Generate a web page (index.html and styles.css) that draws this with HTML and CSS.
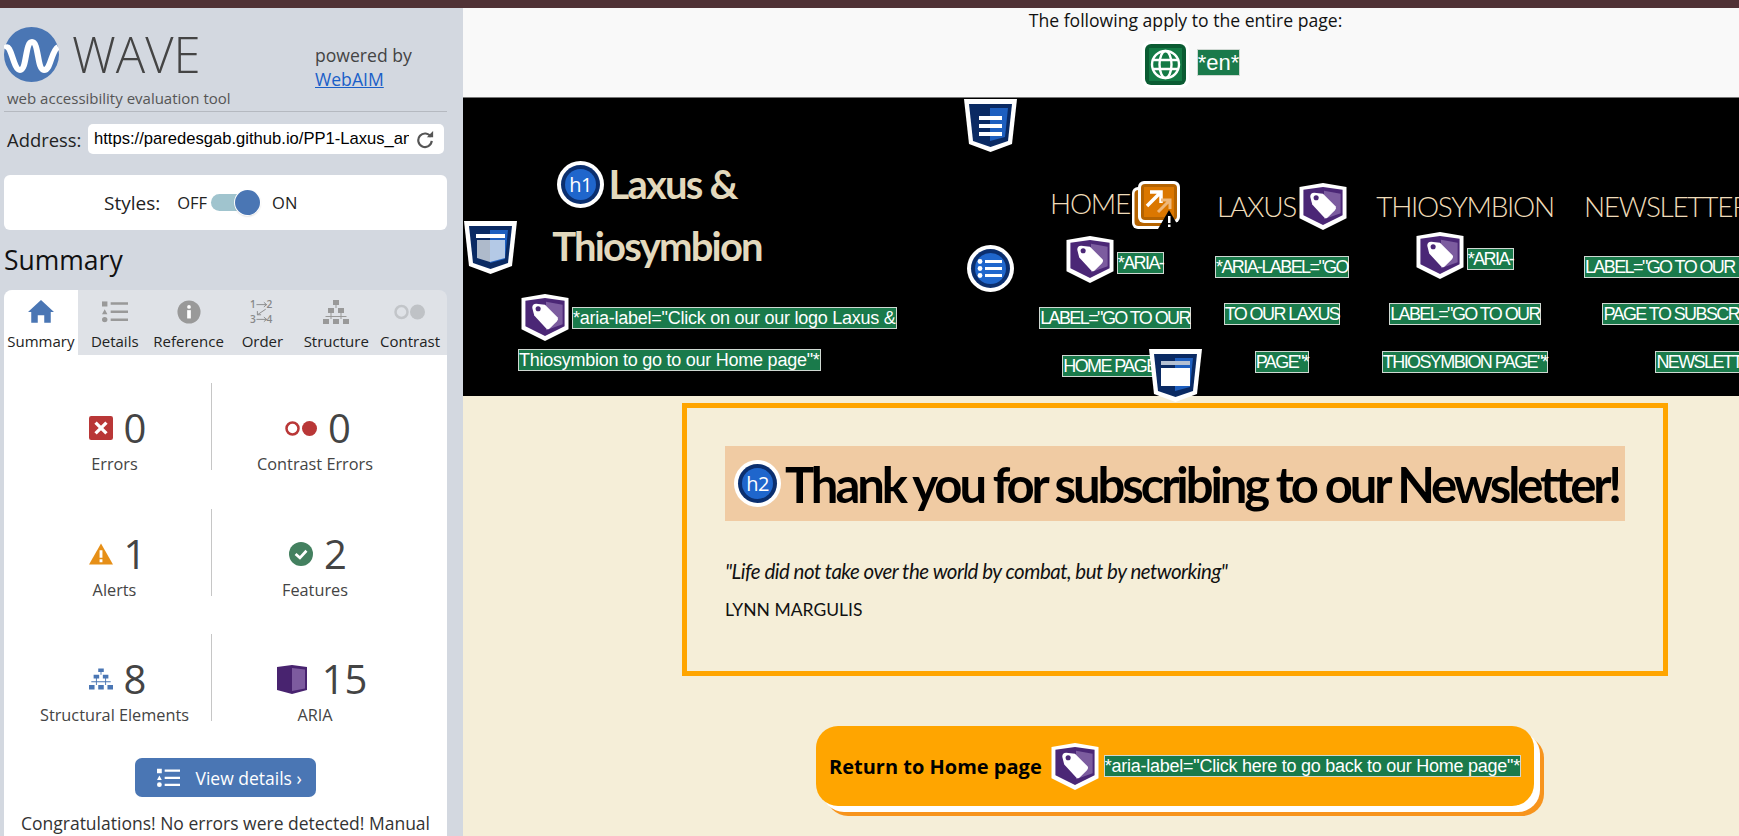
FILE: index.html
```html
<!DOCTYPE html>
<html lang="en">
<head>
  <meta charset="UTF-8" />
  <meta name="viewport" content="width=device-width, initial-scale=1.0"/>
  <title>WAVE - Thank you page</title>
  <link rel="stylesheet" href="styles.css">
</head>
<body>
  <!-- icon sprites -->
  <svg class="sprites" aria-hidden="true">
    <symbol id="i-tag" viewBox="0 0 48 48">
      <path fill="#fff" d="M24 0L48 4V36L24 48L0 36V4Z"/>
      <path fill="#4b2776" d="M24 4L44 7V33L24 43L4 33V7Z"/>
      <path fill="#7c5c9f" d="M25 8L42 11V31L25 37Z"/>
      <path fill="#fff" d="M11 14Q11 10 15 10L24 11L37 24Q38 26 36 28L29 35Q27 37 25 35L13 22Z"/>
      <circle cx="17" cy="15" r="2.600" fill="#4b2776"/>
    </symbol>
    <symbol id="i-section" viewBox="0 0 53 53">
      <path fill="#fff" d="M0 0H53L48 45L26.500 53L5 45Z"/>
      <path fill="#0a2a63" d="M5 5H48L44 42L26.500 48L9 42Z"/>
      <path fill="#1e5fbf" d="M26 9H44L41 38L26 42Z"/>
      <path fill="#fff" d="M15 18H38V22H15ZM15 26H38V30H15ZM15 34H38V38H15Z" transform="translate(0 -1)"/>
    </symbol>
    <symbol id="i-aside" viewBox="0 0 53 53">
      <path fill="#fff" d="M0 0H53L48 45L26.500 53L5 45Z"/>
      <path fill="#0a2a63" d="M5 5H48L44 42L26.500 48L9 42Z"/>
      <path fill="#1e5fbf" d="M26 9H44L41 38L26 42Z"/>
      <path fill="#b4c9e6" d="M26 19H41V37L26 41Z"/>
      <path fill="#aebacb" d="M13 19H26V41L13 37Z"/>
      <path fill="#fff" d="M12 13H41V17H12Z"/>
    </symbol>
    <symbol id="i-window" viewBox="0 0 53 53">
      <path fill="#fff" d="M0 0H53L48 45L26.500 53L5 45Z"/>
      <path fill="#0a2a63" d="M5 5H48L44 42L26.500 48L9 42Z"/>
      <path fill="#1e5fbf" d="M26 9H44L41 38L26 42Z"/>
      <path fill="#fff" d="M12 19H41V37H12Z"/>
      <path fill="#b4c0d2" d="M12 12H41V16H12Z"/>
    </symbol>
    <symbol id="i-list" viewBox="0 0 47 47">
      <circle cx="23.500" cy="23.500" r="23.500" fill="#fff"/>
      <circle cx="23.500" cy="23.500" r="19.500" fill="#0b2f6f"/>
      <circle cx="23.500" cy="23.500" r="15.500" fill="#1f66cc"/>
      <path fill="#fff" d="M18 15H35V18H18ZM18 22H35V25H18ZM18 29H35V32H18Z"/>
      <circle cx="13" cy="16.500" r="2.400" fill="#fff"/>
      <circle cx="13" cy="23.500" r="2.400" fill="#fff"/>
      <circle cx="13" cy="30.500" r="2.400" fill="#fff"/>
    </symbol>
    <symbol id="i-tag-lines" viewBox="0 0 24 20">
      <path fill="currentColor" d="M0 0H5V5H0ZM2.500 7.500L5 12H0Z"/>
      <circle cx="2.500" cy="17" r="2.500" fill="currentColor"/>
      <path fill="currentColor" d="M8 1H24V3.400H8ZM8 8.600H24V11H8ZM8 16H24V18.400H8Z"/>
    </symbol>
  </svg>

  <div class="topbar"></div>

  <div class="layout">
    <aside class="sidebar">
      <div class="brand">
        <div class="brand-main">
          <div class="wave-row">
            <svg class="wave-logo" viewBox="0 0 55 55">
              <circle cx="27.500" cy="27.500" r="27.500" fill="#4a76b4"/>
              <path fill="none" stroke="#fff" stroke-width="6" d="M1 22C7 13 9 43 16 43C23 43 21 15 28 15C35 15 33 43 40 43C47 43 47 24 54 20"/>
            </svg>
            <span class="wave-name">WAVE</span>
          </div>
          <div class="tagline">web accessibility evaluation tool</div>
        </div>
        <div class="powered">powered by<br><a href="#">WebAIM</a></div>
      </div>

      <div class="address">
        <label for="url">Address:</label>
        <div class="address-box">
          <input id="url" type="text" readonly value="https://paredesgab.github.io/PP1-Laxus_and_Thiosymbion/thank-you.html">
          <svg class="reload" viewBox="0 0 20 20">
            <path fill="none" stroke="#555" stroke-width="2.400" d="M16.500 6.500A7.500 7.500 0 1 0 17.500 11"/>
            <path fill="#555" d="M12 7H19V0Z"/>
          </svg>
        </div>
      </div>

      <div class="styles-box">
        <span class="styles-label">Styles:</span>
        <span class="styles-state">OFF</span>
        <span class="toggle"><span class="knob"></span></span>
        <span class="styles-state">ON</span>
      </div>

      <h2 class="summary-title">Summary</h2>

      <nav class="tabs">
        <a class="tab active" href="#">
          <svg viewBox="0 0 24 22"><path fill="#4a76b4" d="M12 0L24 11H21V21H15V14H9V21H3V11H0Z"/></svg>
          Summary
        </a>
        <a class="tab" href="#">
          <svg viewBox="0 0 24 20"><use href="#i-tag-lines"/></svg>
          Details
        </a>
        <a class="tab" href="#">
          <svg viewBox="0 0 26 26"><circle cx="13" cy="13" r="12.500" fill="#999"/><circle cx="13" cy="7.500" r="2" fill="#fff"/><path fill="#fff" d="M11 11H15V20H11Z"/></svg>
          Reference
        </a>
        <a class="tab" href="#">
          <svg viewBox="0 0 26 26" class="order-icon">
            <text x="0" y="9">1</text><text x="18" y="9">2</text><text x="0" y="25">3</text><text x="18" y="25">4</text>
            <path fill="none" stroke="#888" d="M7 5H18M15 2.500L18 5L15 7.500M17 10L8 16M8 12V16H12M7 21H18M15 18.500L18 21L15 23.500"/>
          </svg>
          Order
        </a>
        <a class="tab" href="#">
          <svg viewBox="0 0 26 24"><path fill="#999" d="M10 0H16V5H10ZM5 8H11V13H5ZM15 8H21V13H15ZM0 19H6V24H0ZM10 19H16V24H10ZM20 19H26V24H20ZM12.500 5H13.500V8H12.500ZM7.500 13H8.500V19H7.500ZM17.500 13H18.500V19H17.500ZM2.500 16H23.500V17H2.500Z"/></svg>
          Structure
        </a>
        <a class="tab faded" href="#">
          <svg viewBox="0 0 32 16"><circle cx="7.500" cy="8" r="6" fill="none" stroke="#c2c5c9" stroke-width="2.500"/><circle cx="23.500" cy="8" r="7.500" fill="#bfc2c6"/></svg>
          Contrast
        </a>
      </nav>

      <div class="panel">
        <div class="stats">
          <div class="stat">
            <div class="stat-top">
              <svg class="stat-icon" viewBox="0 0 22 22"><rect width="22" height="22" rx="2" fill="#b93737"/><path stroke="#fff" stroke-width="3" d="M6 6L16 16M16 6L6 16"/></svg>
              <span class="stat-num">0</span>
            </div>
            <div class="stat-label">Errors</div>
          </div>
          <div class="stat">
            <div class="stat-top">
              <svg class="stat-icon contrast-icon" viewBox="0 0 32 15"><circle cx="7.500" cy="7.500" r="6" fill="none" stroke="#b93737" stroke-width="2.500"/><circle cx="24.500" cy="7.500" r="7.500" fill="#b93737"/></svg>
              <span class="stat-num">0</span>
            </div>
            <div class="stat-label">Contrast Errors</div>
          </div>
          <div class="stat">
            <div class="stat-top">
              <svg class="stat-icon" viewBox="0 0 25 22"><path fill="#e68f17" d="M12.500 0L25 22H0Z"/><path fill="#fff" d="M11 7H14V15H11ZM11 16.500H14V19.500H11Z"/></svg>
              <span class="stat-num">1</span>
            </div>
            <div class="stat-label">Alerts</div>
          </div>
          <div class="stat">
            <div class="stat-top">
              <svg class="stat-icon" viewBox="0 0 22 22"><circle cx="11" cy="11" r="11" fill="#43805f"/><path fill="none" stroke="#fff" stroke-width="2.500" d="M6 11L10 14.500L16 8"/></svg>
              <span class="stat-num">2</span>
            </div>
            <div class="stat-label">Features</div>
          </div>
          <div class="stat">
            <div class="stat-top">
              <svg class="stat-icon" viewBox="0 0 26 23"><path fill="#4a76b4" d="M10 0H16V4H10ZM5 7H11V11H5ZM15 7H21V11H15ZM0 18H6V23H0ZM10 18H16V23H10ZM20 18H26V23H20ZM12.500 4H13.500V7H12.500ZM7.500 11H8.500V18H7.500ZM17.500 11H18.500V18H17.500ZM2.500 14H23.500V15H2.500Z"/></svg>
              <span class="stat-num">8</span>
            </div>
            <div class="stat-label">Structural Elements</div>
          </div>
          <div class="stat">
            <div class="stat-top">
              <svg class="stat-icon aria-icon" viewBox="0 0 30 29"><path fill="#48236f" d="M0 2L15 0L30 2V25L15 29L0 25Z"/><path fill="#7d5b9f" d="M15 3L28 4.500V23.500L15 26Z"/></svg>
              <span class="stat-num">15</span>
            </div>
            <div class="stat-label">ARIA</div>
          </div>
        </div>

        <a class="details-btn" href="#">
          <svg viewBox="0 0 24 20"><use href="#i-tag-lines"/></svg>
          View details ›
        </a>
        <p class="congrats">Congratulations! No errors were detected! Manual testing is still necessary.</p>
      </div>
    </aside>

    <div class="page">
      <div class="page-inner">
        <section class="page-level">
          <div class="page-level-title">The following apply to the entire page:</div>
          <div class="page-level-row">
            <svg class="globe" viewBox="0 0 47 47">
              <rect width="47" height="47" rx="8" fill="#fff"/>
              <rect x="3" y="3" width="41" height="41" rx="6" fill="#0b5c33"/>
              <rect x="7" y="7" width="33" height="33" fill="#147a45"/>
              <g fill="none" stroke="#fff" stroke-width="2.400">
                <circle cx="23.500" cy="23.500" r="13.500"/>
                <ellipse cx="23.500" cy="23.500" rx="6" ry="13.500"/>
                <path d="M11 19H36M11 28H36"/>
              </g>
            </svg>
            <span class="lang-label">*en*</span>
          </div>
        </section>

        <header class="site-header">
          <div class="site-brand">
            <h1>
              <span class="h1-line h1-first">
                <svg class="heading-icon" viewBox="0 0 47 47">
                  <circle cx="23.500" cy="23.500" r="23.500" fill="#fff"/>
                  <circle cx="23.500" cy="23.500" r="19.500" fill="#0b2f6f"/>
                  <circle cx="23.500" cy="23.500" r="15.500" fill="#1f66cc"/>
                  <text x="23.500" y="31" class="icon-text">h1</text>
                </svg>
                Laxus &amp;
              </span>
              <span class="h1-line">Thiosymbion</span>
            </h1>
            <div class="brand-label">
              <svg class="tag"><use href="#i-tag"/></svg>
              <span class="label">*aria-label="Click on our our logo Laxus &amp;</span>
            </div>
            <div class="brand-label-2">
              <span class="label">Thiosymbion to go to our Home page"*</span>
            </div>
          </div>

          <ul class="site-nav">
            <li class="nav-item nav-home">
              <div class="nav-title">
                HOME
                <svg class="alert-icon" viewBox="0 0 48 48">
                  <rect x="0" y="6" width="42" height="42" rx="6" fill="#fff"/>
                  <rect x="2.500" y="9" width="36" height="36" rx="4" fill="#b56300"/>
                  <rect x="6" y="0" width="42" height="42" rx="6" fill="#fff"/>
                  <rect x="9" y="3" width="36" height="36" rx="4" fill="#b56300"/>
                  <rect x="12" y="6" width="30" height="30" fill="#db7700"/>
                  <path fill="none" stroke="#fff" stroke-width="3.500" d="M15 25L28 12M18 11H29V22"/>
                  <path fill="none" stroke="#eeb77a" stroke-width="3" d="M26 31L37 20M29 19H38V28"/>
                  <path fill="#000" d="M37 29L48 48H26Z"/>
                  <path fill="#fff" d="M36 35H38.500V42H36ZM36 43.500H38.500V46H36Z"/>
                </svg>
              </div>
              <div class="nav-row tag-row">
                <svg class="tag"><use href="#i-tag"/></svg>
                <span class="label">*ARIA-</span>
              </div>
              <div class="nav-row"><span class="label">LABEL="GO TO OUR</span></div>
              <div class="nav-row"><span class="label">HOME PAGE"*</span></div>
            </li>
            <li class="nav-item">
              <div class="nav-title">
                LAXUS
                <svg class="tag"><use href="#i-tag"/></svg>
              </div>
              <div class="nav-row tag-row low-row"><span class="label">*ARIA-LABEL="GO</span></div>
              <div class="nav-row"><span class="label">TO OUR LAXUS</span></div>
              <div class="nav-row"><span class="label">PAGE"*</span></div>
            </li>
            <li class="nav-item">
              <div class="nav-title">THIOSYMBION</div>
              <div class="nav-row tag-row high-row">
                <svg class="tag"><use href="#i-tag"/></svg>
                <span class="label">*ARIA-</span>
              </div>
              <div class="nav-row"><span class="label">LABEL="GO TO OUR</span></div>
              <div class="nav-row"><span class="label">THIOSYMBION PAGE"*</span></div>
            </li>
            <li class="nav-item">
              <div class="nav-title nav-title-left">NEWSLETTER</div>
              <div class="nav-row tag-row low-row"><span class="label">LABEL="GO TO OUR NEWSLETTER</span></div>
              <div class="nav-row"><span class="label">PAGE TO SUBSCRIBE TO OUR</span></div>
              <div class="nav-row"><span class="label">NEWSLETTER"*</span></div>
            </li>
          </ul>
        </header>

        <main class="content">
          <div class="thanks-box">
            <h2 class="thanks-title">
              <svg class="heading-icon" viewBox="0 0 47 47">
                <circle cx="23.500" cy="23.500" r="23.500" fill="#fff"/>
                <circle cx="23.500" cy="23.500" r="19.500" fill="#0b2f6f"/>
                <circle cx="23.500" cy="23.500" r="15.500" fill="#1f66cc"/>
                <text x="23.500" y="31" class="icon-text">h2</text>
              </svg>
              Thank you for subscribing to our Newsletter!
            </h2>
            <p class="quote">"Life did not take over the world by combat, but by networking"</p>
            <p class="author">LYNN MARGULIS</p>
          </div>

          <a class="home-btn" href="#">
            Return to Home page
            <svg class="tag"><use href="#i-tag"/></svg>
            <span class="label">*aria-label="Click here to go back to our Home page"*</span>
          </a>
        </main>

        <!-- wave markers sitting over the page -->
        <svg class="marker marker-section"><use href="#i-section"/></svg>
        <svg class="marker marker-aside"><use href="#i-aside"/></svg>
        <svg class="marker marker-list"><use href="#i-list"/></svg>
        <svg class="marker marker-window"><use href="#i-window"/></svg>
      </div>
    </div>
  </div>
</body>
</html>
```

FILE: styles.css
```css
html, body {
  margin: 0;
  height: 100%;
  overflow: hidden;
}

body {
  font-family: "Open Sans", sans-serif;
  color: #222;
  background: #f5eed8;
}

.sprites {
  position: absolute;
  width: 0;
  height: 0;
}

.topbar {
  height: 8px;
  background: #503236;
}

.layout {
  display: flex;
  height: 828px;
}

/* sidebar */
.sidebar {
  width: 463px;
  flex-shrink: 0;
  box-sizing: border-box;
  padding: 0 16px 0 4px;
  background: #d3d8e0;
  display: flex;
  flex-direction: column;
  overflow: hidden;
}

.brand {
  display: flex;
  height: 104px;
  flex-shrink: 0;
  box-sizing: border-box;
  padding-top: 19px;
  border-bottom: 1px solid #b5b9c0;
}

.brand-main {
  width: 311px;
}

.wave-row {
  display: flex;
  align-items: center;
  gap: 13px;
  height: 55px;
}

.wave-logo {
  width: 55px;
  height: 55px;
}

.wave-name {
  font-size: 49px;
  font-weight: 300;
  line-height: 55px;
  color: #444;
}

.tagline {
  margin: 7px 0 0 3px;
  font-size: 15px;
  line-height: 18px;
  color: #555;
}

.powered {
  padding-top: 16px;
  font-size: 17.6px;
  line-height: 24px;
  color: #444;
}

.powered a {
  color: #1a5fc8;
}

.address {
  display: flex;
  align-items: center;
  margin-top: 12px;
  height: 30px;
  flex-shrink: 0;
}

.address label {
  width: 84px;
  padding-left: 3px;
  box-sizing: border-box;
  font-size: 18.4px;
  color: #222;
}

.address-box {
  position: relative;
  width: 356px;
  height: 30px;
}

.address-box input {
  width: 100%;
  height: 100%;
  box-sizing: border-box;
  border: none;
  border-radius: 5px;
  padding: 0 35px 0 6px;
  font-family: "Liberation Sans", sans-serif;
  font-size: 16.6px;
  color: #000;
  background: white;
}

.reload {
  position: absolute;
  top: 7px;
  right: 10px;
  width: 18px;
  height: 18px;
}

.styles-box {
  display: flex;
  align-items: center;
  height: 55px;
  flex-shrink: 0;
  margin-top: 21px;
  padding-left: 100px;
  background: white;
  border-radius: 6px;
  color: #222;
}

.styles-label {
  font-size: 19px;
  margin-right: 17px;
}

.styles-state {
  font-size: 16.5px;
}

.toggle {
  position: relative;
  width: 38px;
  height: 17px;
  margin: 0 23px 0 4px;
  border-radius: 9px 0 0 9px;
  background: #a0c4ce;
}

.knob {
  position: absolute;
  top: -4px;
  right: -11px;
  width: 25px;
  height: 25px;
  border-radius: 50%;
  background: #4a76b4;
  box-shadow: 0 0 0 1px #fff, 0 1px 2px rgba(0,0,0,0.3);
}

.summary-title {
  margin: 13px 0 0 0;
  font-size: 26.5px;
  font-weight: 400;
  line-height: 34px;
  color: #111;
  flex-shrink: 0;
}

.tabs {
  display: flex;
  height: 65px;
  flex-shrink: 0;
  margin-top: 13px;
  background: #dfe2e7;
  border-radius: 8px 8px 0 0;
}

.tab {
  flex: 1;
  display: flex;
  flex-direction: column;
  align-items: center;
  font-size: 15px;
  color: #222;
  text-decoration: none;
  padding-top: 10px;
  white-space: nowrap;
}

.tab svg {
  height: 24px;
  width: 26px;
  margin-bottom: 7px;
  color: #999;
}

.tab.active {
  background: white;
  border-radius: 8px 0 0 0;
}

.tab.faded svg {
  width: 32px;
}

.order-icon text {
  font-family: "Open Sans", sans-serif;
  font-size: 11px;
  font-weight: 600;
  fill: #888;
}

.panel {
  flex: 1;
  background: white;
  display: flex;
  flex-direction: column;
  align-items: center;
}

.stats {
  display: grid;
  grid-template-columns: 194px 206px;
  grid-auto-rows: 87px;
  row-gap: 38.5px;
  margin: 28px 0 0 -15px;
}

.stat {
  display: flex;
  flex-direction: column;
  align-items: center;
  padding-top: 25px;
  box-sizing: border-box;
}

.stat:nth-child(odd) {
  border-right: 1px solid #c6c6c6;
}

.stat-top {
  display: flex;
  align-items: center;
  gap: 11px;
  height: 40px;
  padding-left: 6px;
}

.stat-icon {
  width: 24px;
  height: 24px;
}

.contrast-icon {
  width: 32px;
  height: 15px;
}

.aria-icon {
  width: 30px;
  height: 29px;
  margin: 0 4px 0 8px;
}

.stat-num {
  font-size: 40px;
  font-weight: 400;
  line-height: 40px;
  color: #444;
}

.stat-label {
  margin-top: 5px;
  font-size: 16.3px;
  line-height: 22px;
  color: #444;
}

.details-btn {
  display: flex;
  align-items: center;
  gap: 16px;
  width: 181px;
  height: 39px;
  box-sizing: border-box;
  flex-shrink: 0;
  margin: 37px 0 0 -1px;
  padding-left: 22px;
  background: #4a76b4;
  border-radius: 7px;
  color: white;
  font-size: 17.5px;
  text-decoration: none;
}

.details-btn svg {
  width: 23px;
  height: 20px;
}

.congrats {
  margin: 14px 0 0;
  width: 430px;
  text-align: center;
  font-size: 17.5px;
  line-height: 24px;
  color: #333;
}

/* page being evaluated */
.page {
  flex: 1;
  min-width: 0;
  overflow: hidden;
}

.page-inner {
  position: relative;
  width: 1445px;
  height: 100%;
}

.page-level {
  height: 90px;
  box-sizing: border-box;
  background: #f9f9f9;
  border-bottom: 1px solid #777;
  text-align: center;
}

.page-level-title {
  font-size: 17.6px;
  line-height: 24px;
  color: #111;
}

.page-level-row {
  display: flex;
  justify-content: center;
  align-items: center;
  gap: 8px;
  margin-top: 9px;
  padding-left: 11px;
}

.globe {
  width: 47px;
  height: 47px;
}

.label {
  display: inline-block;
  height: 20px;
  box-sizing: content-box;
  border: 1px solid #cfd8d2;
  background: #1a7a4b;
  color: white;
  font-family: "Liberation Sans", sans-serif;
  font-size: 18px;
  font-weight: 400;
  line-height: 20px;
  letter-spacing: -0.25px;
  white-space: nowrap;
}

.lang-label {
  margin-bottom: 5px;
  font-family: "Liberation Sans", sans-serif;
  font-size: 22px;
  line-height: 25px;
  background: #1a7a4b;
  color: white;
  border: 1px solid #cfd8d2;
}

.site-header {
  display: flex;
  height: 298px;
  background: black;
}

.site-brand {
  width: 565px;
  flex-shrink: 0;
  box-sizing: border-box;
  padding: 55px 0 0 55px;
}

h1 {
  margin: 0 0 0 34px;
  width: 210px;
  font-family: Lato, sans-serif;
  font-size: 40px;
  font-weight: 700;
  line-height: 62px;
  letter-spacing: -1.8px;
  color: #e3d9bd;
}

.h1-line {
  display: flex;
  justify-content: center;
  align-items: center;
  gap: 4px;
  height: 62px;
  white-space: nowrap;
}

.h1-first {
  padding-right: 20px;
}

.heading-icon {
  width: 47px;
  height: 47px;
  flex-shrink: 0;
}

.icon-text {
  font-family: "Open Sans", sans-serif;
  font-size: 20px;
  font-weight: 400;
  letter-spacing: -0.5px;
  fill: #fff;
  text-anchor: middle;
}

.tag {
  width: 48px;
  height: 47px;
  flex-shrink: 0;
}

.brand-label {
  display: flex;
  align-items: center;
  gap: 3px;
  height: 47px;
  margin: 17px 0 0 3px;
}

.brand-label-2 {
  margin-top: 8px;
}

.site-nav {
  display: grid;
  grid-template-columns: 174px 160px 206px 294px;
  list-style: none;
  margin: 0;
  padding: 84px 0 0;
}

.nav-item {
  display: flex;
  flex-direction: column;
  align-items: center;
  min-width: 0;
}

.nav-title {
  display: flex;
  align-items: center;
  height: 48px;
  font-family: Lato, sans-serif;
  font-size: 28px;
  font-weight: 300;
  letter-spacing: -1.3px;
  color: #efdcb9;
  white-space: nowrap;
}

.nav-title-left {
  align-self: flex-start;
  margin-left: 16px;
}

.alert-icon {
  width: 48px;
  height: 48px;
  margin: 3px 0 0 2px;
}

.nav-title .tag {
  margin-left: 3px;
}

.nav-row {
  display: flex;
  align-items: center;
  justify-content: center;
  height: 48px;
  white-space: nowrap;
}

.nav-row .label {
  letter-spacing: -1.6px;
}

.tag-row {
  height: 60px;
  gap: 3px;
  box-sizing: border-box;
}

.tag-row .label {
  margin-top: 6px;
}

.low-row {
  padding-top: 14px;
}

.low-row .label {
  margin-top: 0;
}

.high-row {
  padding-bottom: 9px;
}

.nav-home {
  margin-top: -3px;
}

.nav-home .tag-row {
  height: 67px;
  padding-bottom: 2px;
}

/* main content */
.content {
  width: 1424px;
  padding-top: 7px;
}

.thanks-box {
  width: 986px;
  height: 273px;
  box-sizing: border-box;
  margin: 0 auto;
  padding: 38px 38px 0;
  border: 5px solid #ffa500;
}

.thanks-title {
  display: flex;
  align-items: center;
  gap: 4px;
  height: 75px;
  margin: 0;
  padding-left: 9px;
  background: #f0cba3;
  font-family: Lato, sans-serif;
  font-size: 49px;
  font-weight: 700;
  letter-spacing: -3.1px;
  color: black;
  white-space: nowrap;
}

.quote {
  margin: 35px 0 0;
  font-family: Lato, sans-serif;
  font-size: 20.5px;
  font-style: italic;
  line-height: 30px;
  letter-spacing: -0.5px;
  color: #111;
}

.author {
  margin: 11px 0 0;
  font-family: Lato, sans-serif;
  font-size: 17.5px;
  line-height: 26px;
  color: #111;
}

.home-btn {
  display: flex;
  align-items: center;
  width: 718px;
  height: 80px;
  box-sizing: border-box;
  margin: 50px auto 0;
  padding-left: 13px;
  gap: 9px;
  background: #ffa500;
  border-radius: 22px;
  box-shadow: 6px 6px 0 #fff, 10px 10px 0 #f7941d;
  font-size: 20px;
  font-weight: 700;
  color: black;
  text-decoration: none;
  white-space: nowrap;
}

.home-btn .label {
  margin-left: -4px;
}

.marker {
  position: absolute;
  width: 53px;
  height: 53px;
  z-index: 2;
}

.marker-section {
  top: 91px;
  left: 501px;
}

.marker-aside {
  top: 213px;
  left: 1px;
}

.marker-list {
  top: 237px;
  left: 504px;
  width: 47px;
  height: 47px;
}

.marker-window {
  top: 341px;
  left: 686px;
}
```
